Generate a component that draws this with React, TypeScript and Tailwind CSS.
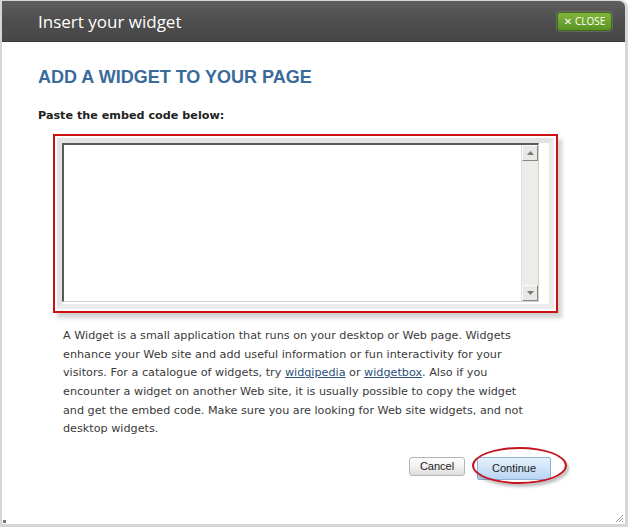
import React from "react";

export default function App() {
  const lines = [
    <>A Widget is a small application that runs on your desktop or Web page. Widgets</>,
    <>enhance your Web site and add useful information or fun interactivity for your</>,
    <>
      visitors. For a catalogue of widgets, try{" "}
      <a className="text-[#2a4f7a] underline">widgipedia</a> or{" "}
      <a className="text-[#2a4f7a] underline">widgetbox</a>. Also if you
    </>,
    <>encounter a widget on another Web site, it is usually possible to copy the widget</>,
    <>and get the embed code. Make sure you are looking for Web site widgets, and not</>,
    <>desktop widgets.</>,
  ];
  return (
    <div className="w-[630px] h-[528px] bg-white relative overflow-hidden">
      <div className="w-[628px] h-[527px] border-l-2 border-r-[3px] border-b-[3px] border-t border-[#d6d6d6] rounded-tr-[8px] flex flex-col relative">
        {/* header */}
        <div className="h-[41px] shrink-0 rounded-tr-[6px] bg-gradient-to-b from-[#5e5e5e] via-[#4e4e4e] to-[#474747] border-b border-[#3a3a3a] flex items-center justify-between pl-[36px] pr-[13px]">
          <span className="text-white text-[17px] leading-none pt-[1px]" style={{ fontFamily: '"Open Sans", "DejaVu Sans", sans-serif' }}>
            Insert your widget
          </span>
          <button className="h-[19px] w-[55px] rounded-[3px] border border-[#3e6a1a] bg-gradient-to-b from-[#82b63c] to-[#5a9424] text-white text-[10px] flex items-center justify-center gap-[3px] shadow-[0_0_0_1px_rgba(255,255,255,0.15)]" style={{ fontFamily: '"Open Sans", "DejaVu Sans", sans-serif' }}>
            <span className="font-bold text-[10px] leading-none">✕</span>
            <span className="leading-none">CLOSE</span>
          </button>
        </div>

        {/* body */}
        <div className="flex-1 pl-[36px] pt-[26px] flex flex-col">
          <h1 className="text-[18px] font-bold text-[#3a6a99] leading-none" style={{ fontFamily: '"Liberation Sans", Arial, sans-serif' }}>
            ADD A WIDGET TO YOUR PAGE
          </h1>
          <p className="mt-[24px] text-[11.2px] font-bold text-[#222] leading-none" style={{ fontFamily: '"DejaVu Sans", Verdana, sans-serif' }}>
            Paste the embed code below:
          </p>

          {/* red box with textarea */}
          <div className="ml-[15px] mt-[13px] w-[505px] h-[179px] border-2 border-[#cc1111] bg-white shadow-[4px_5px_4px_rgba(0,0,0,0.18)] p-[2px]">
            <div className="w-full h-full border-[5px] border-[#e3e3e3] border-r-[#ebebeb] border-b-[#ebebeb] bg-white">
              <div className="w-[477px] h-[159px] border-t-[2px] border-l-[2px] border-[#5a5a5a] border-r border-b border-r-[#d0d0d0] border-b-[#d0d0d0] flex">
                <div className="flex-1" />
                <div className="w-[17px] bg-[#ecece8] flex flex-col justify-between border-l border-[#e0e0dc]">
                  <div className="h-[16px] bg-[#e8e8e4] border border-[#888] border-t-[#fafafa] border-l-[#fafafa] flex items-center justify-center">
                    <svg width="7" height="4" viewBox="0 0 7 4"><path d="M0 4 L3.5 0 L7 4 Z" fill="#777" /></svg>
                  </div>
                  <div className="h-[16px] bg-[#e8e8e4] border border-[#888] border-t-[#fafafa] border-l-[#fafafa] flex items-center justify-center">
                    <svg width="7" height="4" viewBox="0 0 7 4"><path d="M0 0 L3.5 4 L7 0 Z" fill="#777" /></svg>
                  </div>
                </div>
              </div>
            </div>
          </div>

          {/* description */}
          <div className="ml-[25px] mt-[14px] text-[11.2px] leading-[18.6px] text-[#3a3a3a]" style={{ fontFamily: '"DejaVu Sans", Verdana, sans-serif' }}>
            {lines.map((l, i) => (
              <div key={i} className="whitespace-nowrap">{l}</div>
            ))}
          </div>

          {/* buttons */}
          <div className="mt-[15px] flex items-center pl-[371px] gap-[12px]">
            <button className="h-[19px] w-[56px] rounded-[3px] border border-[#b5b5b5] bg-gradient-to-b from-[#fdfdfd] via-[#f2f2f2] to-[#dcdcdc] text-[11px] text-[#222] leading-none" style={{ fontFamily: '"Liberation Sans", Arial, sans-serif' }}>
              Cancel
            </button>
            <div className="relative">
              <button className="h-[23px] w-[74px] rounded-[2px] border border-[#8fb2d8] bg-gradient-to-b from-[#e6f1fc] via-[#cfe3f8] to-[#b9d5f2] text-[11px] text-[#222] leading-none" style={{ fontFamily: '"Liberation Sans", Arial, sans-serif' }}>
                Continue
              </button>
              <div className="absolute left-[-5px] top-[-7px] w-[95px] h-[37px] rounded-[50%] border-2 border-[#c4141c] shadow-[2px_3px_3px_rgba(0,0,0,0.25)] pointer-events-none" />
            </div>
          </div>
        </div>

        {/* resize grip */}
        <svg className="absolute right-[1px] bottom-[1px]" width="10" height="10" viewBox="0 0 10 10">
          <path d="M9 2 L2 9 M9 5 L5 9 M9 8 L8 9" stroke="#999" strokeWidth="1" />
        </svg>
        <div className="absolute left-[1px] bottom-[1px] w-[3px] h-[3px] bg-[#777]" />
      </div>
    </div>
  );
}
